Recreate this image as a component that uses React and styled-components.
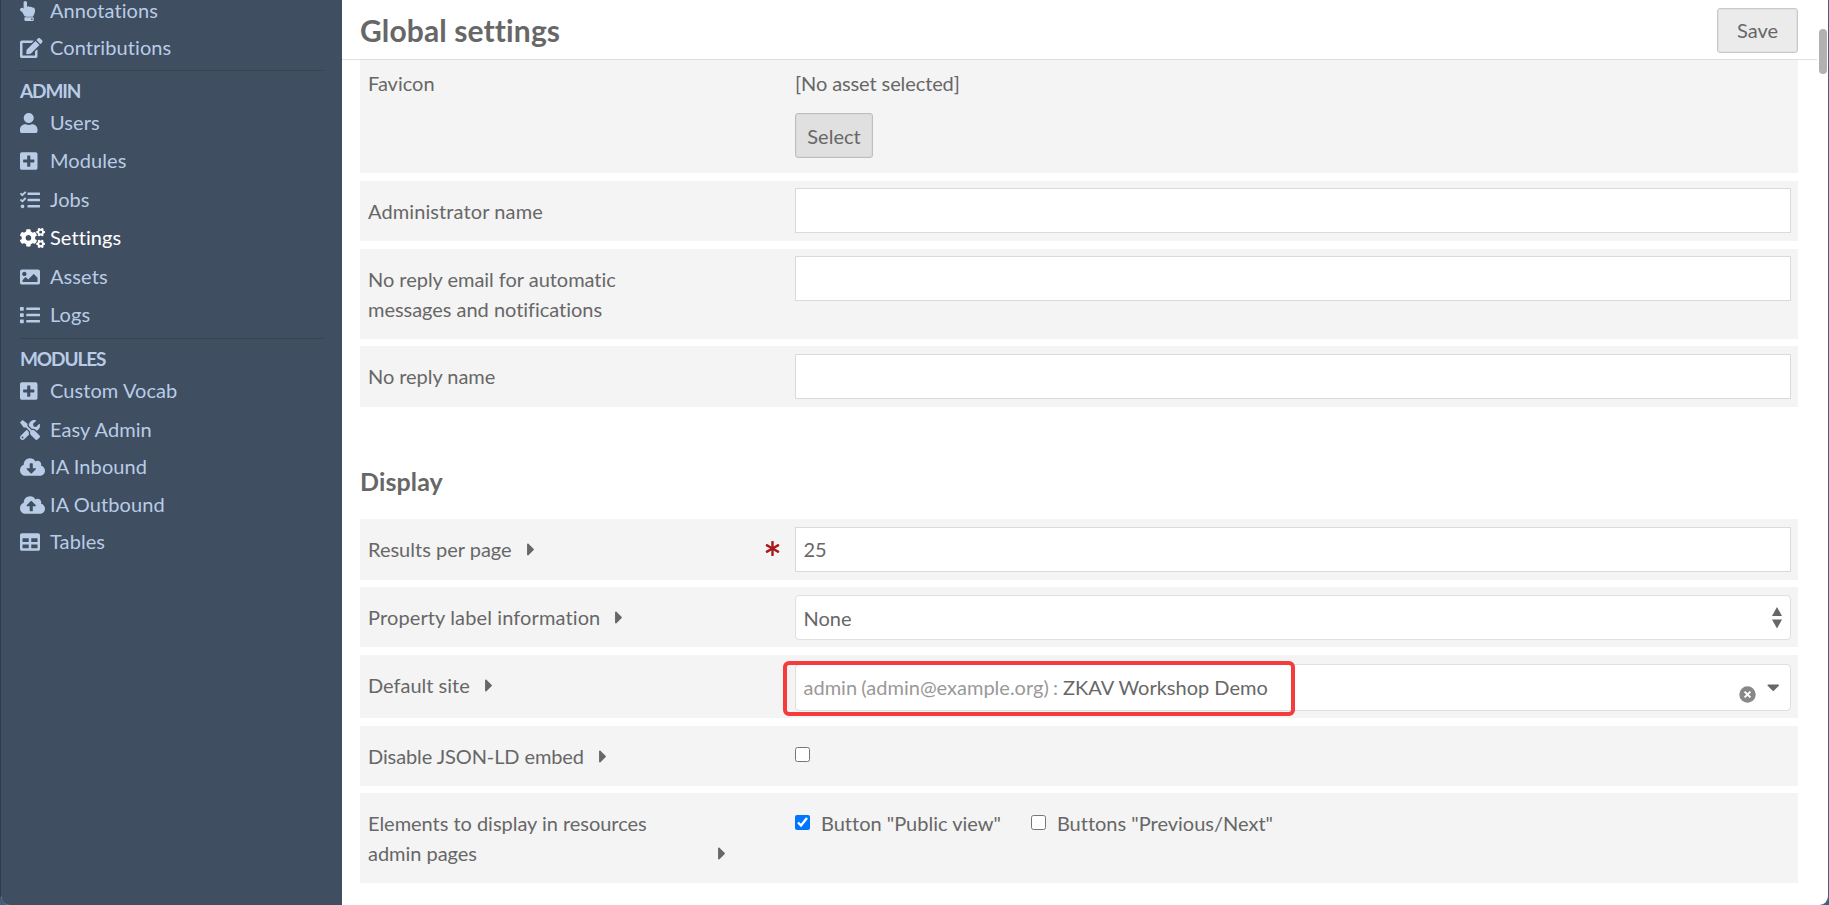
import React from 'react';
import styled, { createGlobalStyle } from 'styled-components';
import {
    FaHandPointUp, FaEdit, FaUser, FaPlusSquare, FaTasks, FaCogs, FaImage, FaList,
    FaTools, FaCloudDownloadAlt, FaCloudUploadAlt, FaTable, FaCaretRight, FaCaretDown, FaAsterisk
} from 'react-icons/fa';

const GlobalStyle = createGlobalStyle`
    * {
        box-sizing: border-box;
    }
    body {
        margin: 0;
        background: #3f5f80;
        color: #676767;
        font-family: Lato, sans-serif;
        font-size: 20px;
        line-height: 30px;
        font-variant-ligatures: none;
    }
`

const Page = styled.div`
    display: flex;
    width: 1829px;
    height: 905px;
    overflow: hidden;
    background: #fff;
    border-left: 1px solid #2f3a4c;
    border-right: 1px solid #3f5f80;
    border-radius: 0 0 9px 9px;
`

const Sidebar = styled.nav`
    width: 341px;
    flex-shrink: 0;
    padding: 0 19px;
    background: #404e61;
`

const MenuGroup = styled.section`
    &:first-child {
        margin-top: -9px;
        padding-bottom: 4px;
    }
    & + & {
        width: 303px;
        border-top: 1px solid #364450;
        padding-bottom: 5px;
    }
`

const MenuTitle = styled.h4`
    margin: 0;
    padding-top: 5px;
    height: 32px;
    font-size: 19px;
    line-height: 30px;
    font-weight: bold;
    letter-spacing: -1.1px;
    color: #b9cce6;
`

const MenuItem = styled.a`
    display: flex;
    align-items: flex-start;
    height: ${p => p.$height || 38}px;
    padding-top: 9px;
    line-height: 20px;
    letter-spacing: 0.08px;
    color: ${p => p.$active ? '#fff' : '#b9cce6'};
    text-decoration: none;
    white-space: nowrap;
`

const IconSlot = styled.span`
    width: 30px;
    height: 20px;
    padding-top: 1px;
    flex-shrink: 0;
    svg {
        display: block;
        width: ${p => p.$width}px;
        height: 20px;
    }
`

const Main = styled.main`
    flex: 1;
    min-width: 0;
`

const Header = styled.header`
    display: flex;
    align-items: center;
    justify-content: space-between;
    width: 1475px;
    height: 60px;
    padding: 1px 19px 0 18px;
    border-bottom: 1px solid #dfdfdf;
`

const Title = styled.h1`
    margin: 0;
    font-size: 30px;
    line-height: 40px;
    font-weight: bold;
    letter-spacing: 0.12px;
`

const Button = styled.button`
    width: ${p => p.$width}px;
    height: 45px;
    padding: 0;
    border: 1px solid ${p => p.$dark ? '#bebebe' : '#c8c8c8'};
    border-radius: 3px;
    box-shadow: inset 0 0 0 1px ${p => p.$dark ? '#dadada' : '#e2e2e2'};
    background: ${p => p.$dark ? '#e0e0e0' : '#ebebeb'};
    color: #676767;
    font: inherit;
`

const Form = styled.form`
    width: 1438px;
    margin-left: 18px;
`

const SectionTitle = styled.h2`
    margin: 0;
    height: 112px;
    padding-top: 59px;
    font-size: 25px;
    line-height: 30px;
    font-weight: bold;
    letter-spacing: 0.12px;
`

const Field = styled.div`
    display: flex;
    height: ${p => p.$height}px;
    margin-bottom: ${p => p.$gap}px;
    padding: 0 7px 0 8px;
    background: #f4f4f4;
`

const Meta = styled.div`
    display: flex;
    align-items: flex-end;
    align-self: flex-start;
    width: 427px;
    flex-shrink: 0;
    padding: ${p => p.$top}px 15px 0 0;
`

const Label = styled.label`
    max-width: 300px;
    letter-spacing: ${p => p.$spacing || 0}px;
`

const Toggle = styled.span`
    display: flex;
    align-items: center;
    height: 30px;
    margin-left: ${p => p.$far ? '50px' : '15px'};
    svg {
        height: 21px;
        width: 8px;
    }
`

const Required = styled.span`
    display: flex;
    align-items: flex-start;
    height: 30px;
    padding-top: 7px;
    margin-left: auto;
    color: #a91919;
    svg {
        width: 15px;
        height: 15px;
    }
`

const Inputs = styled.div`
    flex: 1;
    padding-top: ${p => p.$top}px;
`

const TextInput = styled.input`
    display: block;
    width: 100%;
    height: 45px;
    padding: 0 7.5px 2px;
    border: 1px solid #dadada;
    background: #fff;
    color: #676767;
    font: inherit;
    outline: none;
`

const SelectBox = styled.div`
    display: flex;
    align-items: center;
    height: ${p => p.$height}px;
    padding: 0 8px 0 7.5px;
    border: 1px solid #dfdfdf;
    border-radius: 4px;
    background: #fff;
    & > svg {
        margin-left: auto;
    }
`

const SiteBox = styled(SelectBox)`
    position: relative;
    padding-bottom: 1px;
`

const GroupName = styled.span`
    margin-right: 5px;
    word-spacing: -0.8px;
    color: #999;
`

const SiteTools = styled.span`
    display: flex;
    align-items: center;
    gap: 11px;
    margin: 0 3px 0 auto;
    color: #676767;
    svg:first-child {
        margin-top: 15px;
    }
    svg:last-child {
        width: 12.5px;
        height: 20px;
        margin-top: -1px;
    }
`

// red frame drawn over the default site field
const Highlight = styled.span`
    position: absolute;
    top: -4px;
    left: -13px;
    width: 512px;
    height: 55px;
    border: 4px solid #f43c3c;
    border-radius: 6px;
    pointer-events: none;
`

const AssetText = styled.div`
    height: 45px;
    letter-spacing: -0.1px;
`

const Options = styled.div`
    display: flex;
    gap: 30px;
`

const Option = styled.label`
    display: flex;
    align-items: center;
    height: 30px;
`

const Checkbox = styled.input`
    width: 15px;
    height: 15px;
    margin: 0 11px 1px 0;
`

const ScrollThumb = styled.span`
    position: absolute;
    top: 29px;
    left: 1819px;
    width: 8px;
    height: 45px;
    border-radius: 4px;
    background: #b1b1b1;
`

const menu = [
    {
        items: [
            { text: 'Annotations', icon: FaHandPointUp, width: 15, height: 37 },
            { text: 'Contributions', icon: FaEdit, width: 22.5 },
        ],
    },
    {
        title: 'ADMIN',
        items: [
            { text: 'Users', icon: FaUser, width: 17.5 },
            { text: 'Modules', icon: FaPlusSquare, width: 17.5, height: 39 },
            { text: 'Jobs', icon: FaTasks, width: 20 },
            { text: 'Settings', icon: FaCogs, width: 25, height: 39, active: true },
            { text: 'Assets', icon: FaImage, width: 20 },
            { text: 'Logs', icon: FaList, width: 20 },
        ],
    },
    {
        title: 'MODULES',
        items: [
            { text: 'Custom Vocab', icon: FaPlusSquare, width: 17.5, height: 39 },
            { text: 'Easy Admin', icon: FaTools, width: 20, height: 37 },
            { text: 'IA Inbound', icon: FaCloudDownloadAlt, width: 25 },
            { text: 'IA Outbound', icon: FaCloudUploadAlt, width: 25, height: 37 },
            { text: 'Tables', icon: FaTable, width: 20 },
        ],
    },
]

const SortArrows = () => (
    <svg width="10" height="22" viewBox="0 0 10 22" fill="#676767">
        <path d="M5 0l5 9H0z" />
        <path d="M5 21.500l5-9H0z" />
    </svg>
)

const ClearIcon = () => (
    <svg width="17" height="17" viewBox="0 0 17 17">
        <circle cx="8.500" cy="8.500" r="8.200" fill="#888" />
        <path d="M5.600 5.600l5.800 5.800M11.400 5.600l-5.800 5.800" stroke="#fff" strokeWidth="2" />
    </svg>
)

const Row = ({ label, spacing, height = 60, gap = 8, top = 8, metaTop = 15, toggle, far, required, children }) => (
    <Field $height={height} $gap={gap}>
        <Meta $top={metaTop}>
            <Label $spacing={spacing}>{label}</Label>
            {toggle && <Toggle $far={far}><FaCaretRight /></Toggle>}
            {required && <Required><FaAsterisk /></Required>}
        </Meta>
        <Inputs $top={top}>{children}</Inputs>
    </Field>
)

const App = () => {
    return (
        <>
            <GlobalStyle />
            <Page>
                <Sidebar>
                    {menu.map((group, i) => (
                        <MenuGroup key={i}>
                            {group.title && <MenuTitle>{group.title}</MenuTitle>}
                            {group.items.map(({ text, icon: Icon, width, height, active }) => (
                                <MenuItem key={text} href="#" $height={height} $active={active}>
                                    <IconSlot $width={width}><Icon /></IconSlot>
                                    {text}
                                </MenuItem>
                            ))}
                        </MenuGroup>
                    ))}
                </Sidebar>
                <Main>
                    <Header>
                        <Title>Global settings</Title>
                        <Button $width={81}>Save</Button>
                    </Header>
                    <Form>
                        <Row label="Favicon" height={113} metaTop={8}>
                            <AssetText>[No asset selected]</AssetText>
                            <Button type="button" $width={78} $dark>Select</Button>
                        </Row>
                        <Row label="Administrator name" spacing={0.1} top={7}>
                            <TextInput />
                        </Row>
                        <Row label="No reply email for automatic messages and notifications" spacing={-0.03} height={90} gap={7} top={7}>
                            <TextInput />
                        </Row>
                        <Row label="No reply name" spacing={-0.05} height={61} gap={0}>
                            <TextInput />
                        </Row>
                        <SectionTitle>Display</SectionTitle>
                        <Row label="Results per page" height={61} gap={7} toggle required>
                            <TextInput defaultValue="25" />
                        </Row>
                        <Row label="Property label information" spacing={0.12} toggle>
                            <SelectBox $height={45}>
                                None
                                <SortArrows />
                            </SelectBox>
                        </Row>
                        <Row label="Default site" height={63} top={9} toggle>
                            <SiteBox $height={47}>
                                <GroupName>admin (admin@example.org) :</GroupName>
                                ZKAV Workshop Demo
                                <SiteTools>
                                    <ClearIcon />
                                    <FaCaretDown />
                                </SiteTools>
                                <Highlight />
                            </SiteBox>
                        </Row>
                        <Row label="Disable JSON-LD embed" spacing={-0.1} gap={7} top={14} toggle>
                            <Option><Checkbox type="checkbox" /></Option>
                        </Row>
                        <Row label="Elements to display in resources admin pages" spacing={-0.03} height={90} top={15} toggle far>
                            <Options>
                                <Option><Checkbox type="checkbox" defaultChecked />Button "Public view"</Option>
                                <Option><Checkbox type="checkbox" />Buttons "Previous/Next"</Option>
                            </Options>
                        </Row>
                    </Form>
                </Main>
                <ScrollThumb />
            </Page>
        </>
    );
}

export default App;
